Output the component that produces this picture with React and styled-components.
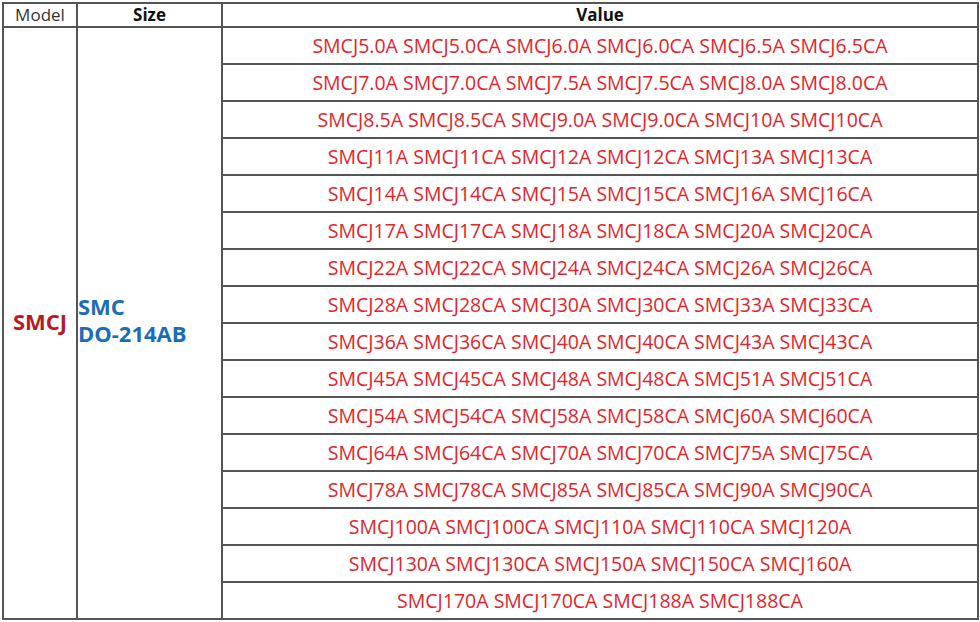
import React from 'react';
import styled, { createGlobalStyle } from 'styled-components';

const GlobalStyle = createGlobalStyle`
  html, body {
    margin: 0;
    padding: 0;
    background: #fff;
  }
  body {
    font-family: "Open Sans", "Noto Sans", sans-serif;
  }
`;

const rows = [
  'SMCJ5.0A SMCJ5.0CA SMCJ6.0A SMCJ6.0CA SMCJ6.5A SMCJ6.5CA',
  'SMCJ7.0A SMCJ7.0CA SMCJ7.5A SMCJ7.5CA SMCJ8.0A SMCJ8.0CA',
  'SMCJ8.5A SMCJ8.5CA SMCJ9.0A SMCJ9.0CA SMCJ10A SMCJ10CA',
  'SMCJ11A SMCJ11CA SMCJ12A SMCJ12CA SMCJ13A SMCJ13CA',
  'SMCJ14A SMCJ14CA SMCJ15A SMCJ15CA SMCJ16A SMCJ16CA',
  'SMCJ17A SMCJ17CA SMCJ18A SMCJ18CA SMCJ20A SMCJ20CA',
  'SMCJ22A SMCJ22CA SMCJ24A SMCJ24CA SMCJ26A SMCJ26CA',
  'SMCJ28A SMCJ28CA SMCJ30A SMCJ30CA SMCJ33A SMCJ33CA',
  'SMCJ36A SMCJ36CA SMCJ40A SMCJ40CA SMCJ43A SMCJ43CA',
  'SMCJ45A SMCJ45CA SMCJ48A SMCJ48CA SMCJ51A SMCJ51CA',
  'SMCJ54A SMCJ54CA SMCJ58A SMCJ58CA SMCJ60A SMCJ60CA',
  'SMCJ64A SMCJ64CA SMCJ70A SMCJ70CA SMCJ75A SMCJ75CA',
  'SMCJ78A SMCJ78CA SMCJ85A SMCJ85CA SMCJ90A SMCJ90CA',
  'SMCJ100A SMCJ100CA SMCJ110A SMCJ110CA SMCJ120A',
  'SMCJ130A SMCJ130CA SMCJ150A SMCJ150CA SMCJ160A',
  'SMCJ170A SMCJ170CA SMCJ188A SMCJ188CA',
];

const App = () => (
  <>
    <GlobalStyle />
    <Wrap>
      <Table>
        <colgroup>
          <col style={{ width: 74 }} />
          <col style={{ width: 145 }} />
          <col />
        </colgroup>
        <thead>
          <tr>
            <HeadCell>Model</HeadCell>
            <HeadCell bold>Size</HeadCell>
            <HeadCell bold>Value</HeadCell>
          </tr>
        </thead>
        <tbody>
          {rows.map((value, i) => (
            <tr key={value}>
              {i === 0 && (
                <>
                  <ModelCell rowSpan={rows.length}>SMCJ</ModelCell>
                  <SizeCell rowSpan={rows.length}>
                    SMC
                    <br />
                    DO-214AB
                  </SizeCell>
                </>
              )}
              <ValueCell>{value}</ValueCell>
            </tr>
          ))}
        </tbody>
      </Table>
    </Wrap>
  </>
);

const Wrap = styled.div`
  padding: 2px 1px 0 2px;
`;

const Table = styled.table`
  width: 977px;
  border-collapse: collapse;
  table-layout: fixed;
  border: 2px solid #555;

  td,
  th {
    border: 2px solid #555;
  }
`;

const HeadCell = styled.th`
  height: 22px;
  padding: 0;
  font-size: 17px;
  line-height: 20px;
  font-weight: ${({ bold }) => (bold ? 700 : 400)};
  color: ${({ bold }) => (bold ? '#111' : '#333')};
  text-align: center;
`;

const ModelCell = styled.td`
  padding: 0 0 5px;
  text-align: center;
  vertical-align: middle;
  font-size: 22px;
  font-weight: 700;
  color: #b51c1f;
`;

const SizeCell = styled.td`
  padding: 0 0 6px 0;
  text-align: left;
  vertical-align: middle;
  font-size: 22px;
  line-height: 27px;
  font-weight: 700;
  color: #1b6db5;
`;

const ValueCell = styled.td`
  height: 35px;
  padding: 0;
  text-align: center;
  vertical-align: middle;
  font-size: 19.5px;
  color: #e3242b;
  white-space: nowrap;
`;

export default App;
